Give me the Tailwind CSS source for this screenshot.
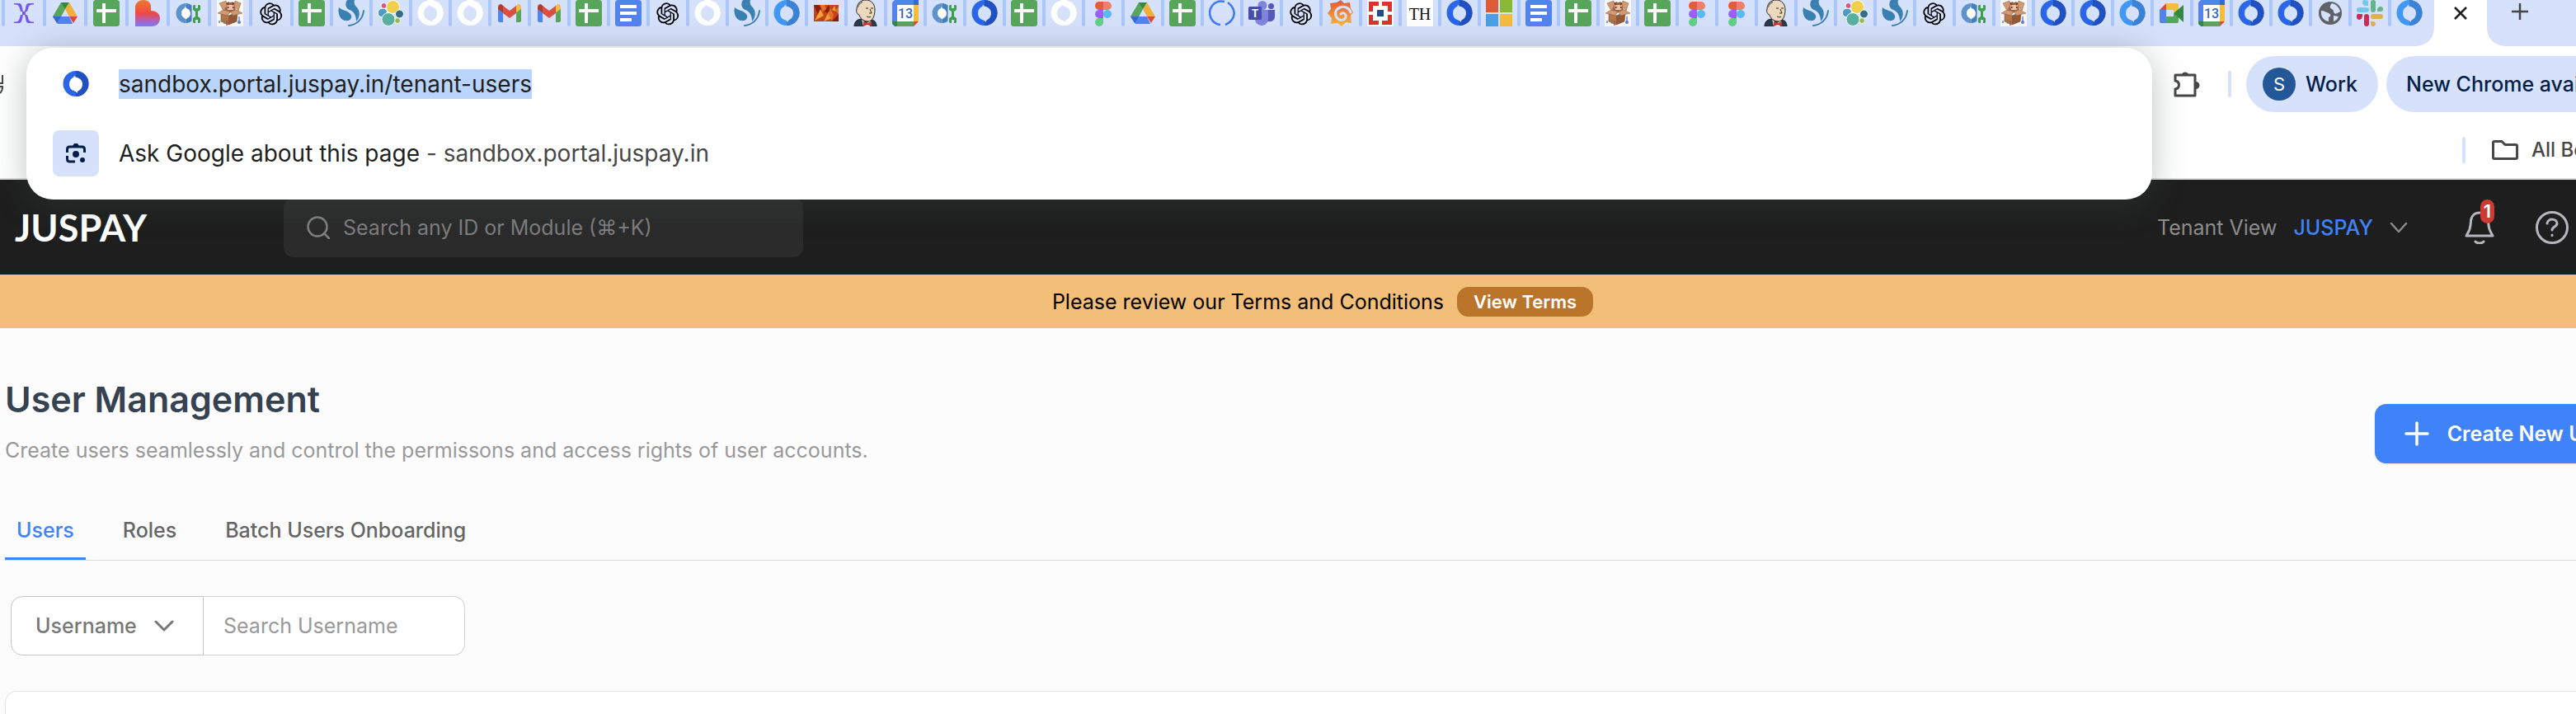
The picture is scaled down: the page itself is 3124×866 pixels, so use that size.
<!DOCTYPE html>
<html lang="en">

<head>
  <meta charset="UTF-8" />
  <title>User Management</title>
  <meta name="viewport" content="width=device-width, initial-scale=1.0" />
  <script src="https://cdn.jsdelivr.net/npm/@tailwindcss/browser@4"></script>
</head>

<body class="min-h-screen overflow-hidden bg-[#fcfcfc] font-['Inter',sans-serif] text-[25px] leading-8">

  <!-- Favicons -->
  <svg class="absolute h-0 w-0" aria-hidden="true">
    <defs>
      <linearGradient id="g-blob" x1="0" y1="0" x2="0" y2="1">
        <stop offset="0" stop-color="#ef7a2c" /><stop offset=".5" stop-color="#ee4a44" /><stop offset=".75" stop-color="#b95fb0" /><stop offset="1" stop-color="#7a7cfa" />
      </linearGradient>
      <linearGradient id="g-grafana" x1="0" y1="0" x2="0" y2="1">
        <stop offset="0" stop-color="#e0573a" /><stop offset="1" stop-color="#f7bd3e" />
      </linearGradient>
      <mask id="ring-hole">
        <rect width="32" height="32" fill="#fff" />
        <path fill="#000" d="M14 5.5c.6 1.4 2 2.200 3.500 2.500 4 1.200 6.500 4 6.500 8s-2 7-5.500 8.500l-1 2.500c-.8-1.500-2-2.300-3.500-2.700C10 23 8 20 8 16s2-7 5.300-8.300z" />
      </mask>
      <symbol id="ring" viewBox="0 0 32 32">
        <g mask="url(#ring-hole)"><circle cx="16" cy="15.500" r="15.500" fill="currentColor" /><path d="M16 0a15.500 15.500 0 0 1 0 31z" /></g>
      </symbol>
      <symbol id="x" viewBox="0 0 32 32">
        <g fill="#7457ee">
          <path d="M4 4h6c3 0 3.500 3 4 6l1 4h-3l-1.500-5C9.500 6 8 5.500 4 5.500zM28 4h-6c-3 0-3.500 3-4 6l-1 4h3l1.500-5c1-3 2.500-3.500 6.500-3.500zM4 28h6c3 0 3.500-3 4-6l1-4h-3l-1.500 5c-1 3-2.500 3.500-6.500 3.500zM28 28h-6c-3 0-3.500-3-4-6l-1-4h3l1.500 5c1 3 2.500 3.500 6.500 3.500z" />
          <path d="M14 14h4v4h-4z" />
        </g>
      </symbol>
      <symbol id="drive" viewBox="0 0 32 32">
        <path fill="#58a55c" d="M11 3h10l-5 8L7 28l-6-8z" /><path fill="#358842" d="M11 3h10l-5 8z" />
        <path fill="#f1b03c" d="M21 3l10 17h-10l-5-9z" />
        <path fill="#5384ed" d="M11 20h10l4 9H7l-6-9z" /><path fill="#3869d1" d="M1 20h10l-5 8z" /><path fill="#dc4a3a" d="M21 20h10l-5 8z" />
      </symbol>
      <symbol id="sheet" viewBox="0 0 32 32">
        <rect width="32" height="32" rx="3.500" fill="#58a55c" /><path fill="#fff" d="M11 4h4v7h13v4H15v13h-4V15H4v-4h7z" />
      </symbol>
      <symbol id="docs" viewBox="0 0 32 32">
        <rect width="32" height="32" rx="3.500" fill="#5384ed" /><path fill="#fff" d="M6 6h20v4H6zM6 14h20v4H6zM6 22h14v4H6z" />
      </symbol>
      <symbol id="blob" viewBox="0 0 32 32">
        <path fill="url(#g-blob)" d="M1 9C1 4 5 0 11 0c6 0 9 4 9 8v5c7 0 11 4 11 9 0 6-4 10-10 10H1z" />
      </symbol>
      <symbol id="wrench" viewBox="0 0 32 32">
        <path fill="#5f93cc" d="M12.500 4a12 12 0 0 0 0 24z" /><path fill="#4480bf" d="M12.500 4c3 0 5 1 7 2.500v19c-2 1.500-4 2.500-7 2.500z" />
        <path fill="#fff" d="M11.500 8l1.500 2c3.500 1 5 3.500 5 6s-1 5-4 6l-1.500 1.500L11 22c-3-1-4-3.500-4-6s1-5 4-6z" />
        <path fill="#42a04d" d="M21 7v5l3 2v6l-3 2v5l1 1h2v-4h3v4h2l1-1v-5l-3-2v-6l3-2V7l-1-1h-2v4h-3V6h-2z" />
      </symbol>
      <symbol id="box" viewBox="0 0 32 32">
        <path fill="#fbf9f8" d="M0 0h32v32H0z" />
        <path fill="#b3764d" stroke="#6b402a" stroke-width=".5" d="M5 16l9 3 11-4-1 11-10 4-9-4z" /><path fill="#935a38" d="M14 19l11-4-1 11-10 4z" />
        <path fill="#a4623f" d="M11 3h10l2 9-8 4-6-3z" /><path fill="#efc0a8" d="M12 6h9l-1 6h-7z" /><path fill="#7c4630" d="M11 4l4-2-1 5zM18 2l4 2-3 3z" /><path fill="#6b3024" d="M13 8h1.500v2H13zM19 8h1.500v2H19z" />
        <path fill="#d09a70" stroke="#8a5a3c" stroke-width=".5" d="M3 4l8-3 1 6-4 6zM29 4l-7-3-1 6 5 6zM8 12l-7 4 12 3 3-5zM24 12l-7 2 2 5 12-3z" />
        <path stroke="#4a6fb8" stroke-width="1.200" d="M3 25v3M27 20v7" /><path stroke="#c93a4e" stroke-width="1.200" d="M12 25v6" /><path stroke="#4a9a53" stroke-width="1.200" d="M9 24v5" /><circle cx="27" cy="27" r="2" fill="#5a83cf" />
      </symbol>
      <symbol id="openai" viewBox="-2 -3 28.500 28.500">
        <path d="M22.2819 9.8211a5.9847 5.9847 0 0 0-.5157-4.9108 6.0462 6.0462 0 0 0-6.5098-2.9A6.0651 6.0651 0 0 0 4.9807 4.1818a5.9847 5.9847 0 0 0-3.9977 2.9 6.0462 6.0462 0 0 0 .7427 7.0966 5.98 5.98 0 0 0 .511 4.9107 6.051 6.051 0 0 0 6.5146 2.9001A5.9847 5.9847 0 0 0 13.2599 24a6.0557 6.0557 0 0 0 5.7718-4.2058 5.9894 5.9894 0 0 0 3.9977-2.9001 6.0557 6.0557 0 0 0-.7475-7.0729zm-9.022 12.6081a4.4755 4.4755 0 0 1-2.8764-1.0408l.1419-.0804 4.7783-2.7582a.7948.7948 0 0 0 .3927-.6813v-6.7369l2.02 1.1686a.071.071 0 0 1 .038.052v5.5826a4.504 4.504 0 0 1-4.4945 4.4944zm-9.6607-4.1254a4.4708 4.4708 0 0 1-.5346-3.0137l.142.0852 4.783 2.7582a.7712.7712 0 0 0 .7806 0l5.8428-3.3685v2.3324a.0804.0804 0 0 1-.0332.0615L9.74 19.9502a4.4992 4.4992 0 0 1-6.1408-1.6464zM2.3408 7.8956a4.485 4.485 0 0 1 2.3655-1.9728V11.6a.7664.7664 0 0 0 .3879.6765l5.8144 3.3543-2.0201 1.1685a.0757.0757 0 0 1-.071 0l-4.8303-2.7865A4.504 4.504 0 0 1 2.3408 7.872zm16.5963 3.8558L13.1038 8.364 15.1192 7.2a.0757.0757 0 0 1 .071 0l4.8303 2.7913a4.4944 4.4944 0 0 1-.6765 8.1042v-5.6772a.79.79 0 0 0-.407-.667zm2.0107-3.0231l-.142-.0852-4.7735-2.7818a.7759.7759 0 0 0-.7854 0L9.409 9.2297V6.8974a.0662.0662 0 0 1 .0284-.0615l4.8303-2.7866a4.4992 4.4992 0 0 1 6.6802 4.66zM8.3065 12.863l-2.02-1.1638a.0804.0804 0 0 1-.038-.0567V6.0742a4.4992 4.4992 0 0 1 7.3757-3.4537l-.142.0805L8.704 5.459a.7948.7948 0 0 0-.3927.6813zm1.0976-2.3654l2.602-1.4998 2.6069 1.4998v2.9994l-2.5974 1.4997-2.6067-1.4997Z" />
      </symbol>
      <symbol id="swirl" viewBox="0 0 32 32">
        <path fill="#3a80b2" d="M11 0C8 5 9 10 14 12c5 2 8 6 8 14 5-6 5-13 0-18-2-2-3-5-2-8zM1 9c4 4 10 3 14 8 3 4 0 9-6 8C3 24-1 17 1 9z" />
        <path fill="none" stroke="#3a80b2" stroke-width="2" stroke-linecap="round" d="M31 13c-1 10-8 17-18 18" />
      </symbol>
      <symbol id="elastic" viewBox="0 0 32 32">
        <g stroke="#fff" stroke-width="1"><circle cx="7.500" cy="7" r="3.500" fill="#d35491" /><circle cx="18.500" cy="8.500" r="8" fill="#f0cf4c" /><circle cx="6" cy="15.500" r="5.500" fill="#4a9bc9" /><circle cx="26.500" cy="17" r="5" fill="#356e8d" /><circle cx="24" cy="25" r="3.500" fill="#95c04e" /><circle cx="13" cy="23.500" r="8" fill="#5bb0a1" /></g>
      </symbol>
      <symbol id="gmail" viewBox="0 0 32 32">
        <path fill="#5384ed" d="M2 9l6 5v13H4q-2 0-2-2z" /><path fill="#58a55c" d="M30 9l-6 5v13h4q2 0 2-2z" /><path fill="#b53a2e" d="M2 9q0-4 4-4l3 3v8l-7-5z" /><path fill="#f1bd42" d="M30 9q0-4-4-4l-3 3v8l7-5z" /><path fill="#d85040" d="M8 7l8 6 8-6v9l-8 6-8-6z" />
      </symbol>
      <symbol id="map" viewBox="0 0 32 32">
        <path fill="#c2431c" d="M1 6h30v20H1z" /><path fill="#85200c" d="M1 6h6l4 6-5 6zM14 14l5-8 3 12zM23 26l8-9v9z" /><path fill="#f3a23a" d="M2 25l7-14 4 8zM13 26l6-12 4 8zM23 12l3-5 2 7z" /><path fill="#e4702a" d="M9 6h5l2 5-5 3zM21 10l4 8-2 7-5-8zM27 13l4-5v9z" />
      </symbol>
      <symbol id="jenkins" viewBox="0 0 32 32">
        <path fill="#2b3a4c" stroke="#1c2129" d="M2 32c0-6 4-9 9-9h10c5 1 8 4 8 9z" /><path fill="#f7f5f2" d="M11 22l5 7 6-5-1 8h-8z" />
        <path fill="#efd9bd" stroke="#2a2724" stroke-width="1" d="M5 11C5 4 10 0 16 0c7 0 11 5 11 12s-3 14-8 14C13 26 9 22 8 18c-3-1-4-4-3-7z" /><path fill="none" stroke="#7b7b7b" stroke-width="2" d="M6 9c1-4 3-6 6-7" />
        <path fill="none" stroke="#2a2724" d="M16 10h3M22 10h3M21 11l2 5h-3M17 20c2 1 4 1 5 0" /><path fill="#ce3630" d="M13 26l5 2 5-2v6l-5-2-5 2z" />
      </symbol>
      <symbol id="calendar" viewBox="0 0 32 32">
        <path fill="#5384ed" d="M3 0h23v6H6v20H0V3z" /><path fill="#3869d1" d="M26 0h6v6h-6z" /><path fill="#f1bd42" d="M26 6h6v20h-6z" /><path fill="#58a55c" d="M6 26h20v6H6z" /><path fill="#358842" d="M0 26h6v6H3l-3-3z" /><path fill="#dc4a3a" d="M26 26h6l-6 6z" /><path fill="#fff" d="M6 6h20v20H6z" />
        <text x="16" y="22" text-anchor="middle" font-family="Roboto, sans-serif" font-size="16" font-weight="500" fill="#2f66ca">13</text>
      </symbol>
      <symbol id="figma" viewBox="0 0 32 32">
        <path fill="#de6038" d="M11 2h5v10h-5a5 5 0 0 1 0-10z" /><path fill="#ec7f6d" d="M16 2h5a5 5 0 0 1 0 10h-5z" /><path fill="#9a61f6" d="M11 12h5v10h-5a5 5 0 0 1 0-10z" /><circle cx="21" cy="17" r="5" fill="#5ab9f9" /><path fill="#65cd8b" d="M11 22h5v5a5 5 0 1 1-5-5z" />
      </symbol>
      <symbol id="thin" viewBox="0 0 32 32">
        <path fill="none" stroke="#3f78f3" stroke-width="2.500" d="M14 30A14.500 14.500 0 0 1 4 7C8 2 14 1 19 2M23 3c6 4 9 11 7 17-2 5-5 8-10 10" />
      </symbol>
      <symbol id="teams" viewBox="0 0 32 32">
        <circle cx="17" cy="6.500" r="5.500" fill="#7f84dd" /><circle cx="27.500" cy="7.500" r="3.500" fill="#5558bd" /><path fill="#5558bd" d="M22 12h10v8c0 4-3 6-6 6h-4z" /><path fill="#7f84dd" d="M8 12h16v10c0 6-4 9-8 9s-8-3-8-8z" /><rect y="8" width="16" height="16" rx="1.500" fill="#494db0" />
        <text x="8" y="20.500" text-anchor="middle" font-family="Inter, sans-serif" font-weight="700" font-size="13" fill="#fff">T</text>
      </symbol>
      <symbol id="grafana" viewBox="0 0 32 32">
        <path fill="url(#g-grafana)" d="M16 0l4 4 7-1 1 7 3 5-3 4 1 9-7-1-5 5-5-4-8 1 1-7-5-6 4-5-1-7 8-1z" /><path fill="none" stroke="#d6e1fb" stroke-width="3" stroke-linecap="round" d="M28 15c-2-6-8-8-13-6s-7 7-4 12 10 4 11 0-3-7-6-4" />
      </symbol>
      <symbol id="hdfc" viewBox="0 0 32 32">
        <path fill="#fff" d="M0 0h32v32H0z" /><path fill="#da352c" d="M2 2h28v28H2z" /><path fill="#fff" d="M7 7h18v18H7zM14 2h4v28h-4zM2 14h28v4H2z" /><path fill="#234c86" d="M12 12h8v8h-8z" />
      </symbol>
      <symbol id="th" viewBox="0 0 32 32">
        <path fill="#fff" d="M0 0h32v32H0z" /><text x="16" y="24" text-anchor="middle" font-family="Liberation Serif, serif" font-size="20" fill="#111">TH</text>
      </symbol>
      <symbol id="microsoft" viewBox="0 0 32 32">
        <path fill="#df5b34" d="M0 0h15v15H0z" /><path fill="#8ab833" d="M17 0h15v15H17z" /><path fill="#4ba0e8" d="M0 17h15v15H0z" /><path fill="#f5bb42" d="M17 17h15v15H17z" />
      </symbol>
      <symbol id="meet" viewBox="0 0 32 32">
        <path fill="#dc4a3a" d="M1 12l8-8v8z" /><path fill="#f1bd42" d="M9 4h13q2 0 2 2v7l-6 3v-4H9z" /><path fill="#5384ed" d="M1 12h8v16H3q-2 0-2-2z" /><path fill="#58a55c" d="M9 20h9v-4l6 4v6q0 2-2 2H9z" /><path fill="#358842" d="M18 16l12-10v21z" />
      </symbol>
      <symbol id="globe" viewBox="0 0 32 32">
        <circle cx="16" cy="16" r="14" fill="#5f6368" /><path fill="#d6e1fb" d="M5 13c4 0 6 2 9 3s3 4 0 5v5c-6-1-10-6-9-13zM18 4c5 1 9 5 10 10-2 1-5 4-7 2s0-4-3-5-3-4 0-7zM20 19l6 1c-1 3-3 5-6 6z" />
      </symbol>
      <symbol id="slack" viewBox="0 0 32 32">
        <path fill="#76c7ed" d="M9 0h2q3 0 3 3v4h-4q-3-1-3-4 0-3 2-3zM3 9h9q3 0 3 3t-3 3H3q-3 0-3-3t3-3z" /><path fill="#62b884" d="M17 3q0-3 3-3t3 3v9q0 3-3 3t-3-3zM25 14v-3q1-3 4-3t3 3-3 3z" /><path fill="#cb2b59" d="M7 17v3q-1 4-4 4t-3-4 3-3zM9 20q0-3 3-3t3 3v9q0 3-3 3t-3-3z" /><path fill="#e0b04a" d="M20 17h9q3 0 3 3t-3 3h-9q-3 0-3-3t3-3zM17 26h3q3 0 3 3t-3 3-3-3z" />
      </symbol>
    </defs>
  </svg>

  <!-- The window is a little wider than the viewport -->
  <div class="relative w-[calc(100%+84px)]">

    <!-- Tab strip -->
    <nav class="flex h-14 items-start bg-[#d6e1fb] pl-0.5" aria-label="Tabs">
      <div id="tabs" class="flex"></div>
      <button class="relative -ml-3.5 h-14 w-27 shrink-0" aria-label="Close tab">
        <svg viewBox="0 0 108 56" class="h-14 w-27" fill="none">
          <path fill="#fff" d="M0 56C14 55 22 46 22 33V0h64v33c0 13 8 22 22 23z" />
          <path stroke="#1f1f1f" stroke-width="2.500" d="M47 9l14 14M61 9L47 23" />
        </svg>
      </button>
      <button class="mt-1 ml-2 shrink-0" aria-label="New tab">
        <svg viewBox="0 0 20 20" class="h-5 w-5" stroke="#474747" stroke-width="2.500"><path d="M10 0v20M0 10h20" /></svg>
      </button>
    </nav>

    <!-- Toolbar and bookmarks -->
    <div class="border-b-2 border-[#dcdcdc] bg-white font-medium">
      <div class="flex h-23 items-center justify-between">
        <svg viewBox="0 0 4 28" class="h-7 w-1" stroke="#474747" stroke-width="2" fill="none"><path d="M0 13h3V3M0 17h3c0 4-1 6-3 8" /></svg>
        <div class="flex w-[572px] items-center">
          <button aria-label="Extensions">
            <svg viewBox="0 0 32 32" class="h-8 w-8" fill="none" stroke="#474747" stroke-width="3" stroke-linejoin="round">
              <path d="M2 5h24v25H2v-8c6-1 6-9 0-10z" /><path fill="#474747" stroke="none" d="M10 4a4.500 4.500 0 0 1 8 0zM27 13a4.500 4.500 0 0 1 0 9z" />
            </svg>
          </button>
          <span class="ml-[34px] h-8 w-1 rounded-full bg-[#d6e1fb]"></span>
          <button class="ml-4.5 flex h-17 w-40 items-center gap-3 rounded-full bg-[#d6e1fb] pl-5 text-[#041e49]">
            <span class="flex h-10 w-10 items-center justify-center rounded-full bg-[#235797] text-[22px] font-normal text-white">S</span>
            Work
          </button>
          <button class="ml-2.5 h-17 flex-1 rounded-full bg-[#d6e1fb] pl-6 text-left whitespace-nowrap text-[#041e49]">New Chrome available</button>
        </div>
      </div>
      <div class="flex h-17 items-center justify-end">
        <div class="flex w-[222px] items-center whitespace-nowrap text-[#474747]">
          <span class="mr-8 h-8 w-1 shrink-0 rounded-full bg-[#d6e1fb]"></span>
          <svg viewBox="0 0 32 24" class="mr-4 h-6 w-8 shrink-0" fill="none" stroke="#474747" stroke-width="3" stroke-linejoin="round"><path d="M3 1.500h9l4 4h13q1.500 0 1.500 1.500v14q0 1.500-1.500 1.500H3q-1.500 0-1.500-1.500V3q0-1.500 1.500-1.500z" /></svg>
          <a href="#" class="text-[24px]">All Bookmarks</a>
        </div>
      </div>
    </div>

    <!-- App header -->
    <header class="flex h-[115px] items-center justify-between bg-[#1e1e1e]">
      <div class="flex items-center">
        <a href="#" class="w-[344px] pl-4.5 font-['Lato',sans-serif] text-[45px] font-bold text-white">JUSPAY</a>
        <label class="flex h-18 w-[630px] items-center gap-4 rounded-xl bg-[#2b2b2b] pl-7">
          <svg viewBox="0 0 28 28" class="h-7 w-7" fill="none" stroke="#808080" stroke-width="2.500" stroke-linecap="round"><circle cx="13" cy="13" r="11.500" /><path d="M21 21l6 6" /></svg>
          <input type="text" placeholder="Search any ID or Module (⌘+K)" class="flex-1 bg-transparent placeholder:text-[#7d7d7d] focus:outline-none" />
        </label>
      </div>
      <div class="flex w-[592px] items-center">
        <button class="flex items-center gap-5 text-[#8c8c8c]">
          Tenant View
          <span class="font-medium text-[#4083f8]">JUSPAY</span>
          <svg viewBox="0 0 22 14" class="h-3.5 w-5.5" fill="none" stroke="#8c8c8c" stroke-width="2.500" stroke-linecap="round" stroke-linejoin="round"><path d="M2 2l9 10 9-10" /></svg>
        </button>
        <button class="relative ml-[69px] h-10 w-9" aria-label="Notifications">
          <svg viewBox="0 0 36 40" class="h-10 w-9" fill="none" stroke="#b6b6be" stroke-width="3" stroke-linecap="round" stroke-linejoin="round"><path d="M18 2C12 2 8 6 7.500 12 7 21 6 23 2 30h32c-4-7-5-9-5.500-18C28 6 24 2 18 2zM13 37c2 2.500 8 2.500 10 0" /></svg>
          <span class="absolute -top-3.5 right-0 flex h-[29px] w-[17px] items-center justify-center rounded-full bg-[#cc3a34] text-[22px] font-semibold text-white">1</span>
        </button>
        <button class="ml-[50px]" aria-label="Help">
          <svg viewBox="0 0 40 40" class="h-10 w-10" fill="none" stroke="#b6b6be" stroke-width="3" stroke-linecap="round" stroke-linejoin="round"><circle cx="20" cy="20" r="18.500" /><path d="M14 15c1-7 12-6 12 0 0 4-6 4-6 8" /><path d="M20 29v.5" /></svg>
        </button>
      </div>
    </header>

    <!-- Terms banner -->
    <div class="flex h-[65px] items-center justify-center gap-4 bg-[#f2be78] text-black">
      <p>Please review our Terms and Conditions</p>
      <button class="h-9 rounded-[14px] bg-[#ba752b] px-5 text-[22px] font-semibold text-white">View Terms</button>
    </div>

    <main class="pt-[62px] pl-1.5">
      <div class="flex items-end justify-between">
        <div>
          <h1 class="mb-[22px] text-[43px] leading-12 font-semibold text-[#364152]">User Management</h1>
          <p class="text-[#999]">Create users seamlessly and control the permissons and access rights of user accounts.</p>
        </div>
        <button class="flex h-18 items-center gap-[22px] rounded-[14px] bg-[#4083f8] px-9 font-semibold whitespace-nowrap text-white shadow-sm">
          <svg viewBox="0 0 30 30" class="h-[30px] w-[30px]" stroke="#fff" stroke-width="3.500" stroke-linecap="round"><path d="M15 2v26M2 15h26" /></svg>
          Create New User
        </button>
      </div>

      <div class="mt-12 flex gap-[31px] border-b border-[#d9dae6] font-medium text-[#666]" role="tablist">
        <button class="h-[69px] border-b-3 border-[#4083f8] px-3.5 text-[#4083f8]" role="tab" aria-selected="true">Users</button>
        <button class="h-[69px] border-b-3 border-transparent px-3.5" role="tab">Roles</button>
        <button class="h-[69px] border-b-3 border-transparent px-3.5" role="tab">Batch Users Onboarding</button>
      </div>

      <form class="mt-[43px] ml-[7px] flex h-18">
        <label class="flex w-[234px] items-center rounded-l-[14px] border border-[#c4c4c4] bg-white pl-[29px]">
          <select aria-label="Search by" class="w-36 appearance-none bg-transparent font-medium text-[#777] focus:outline-none">
            <option>Username</option>
            <option>Role</option>
          </select>
          <svg viewBox="0 0 24 16" class="h-4 w-6" fill="none" stroke="#777" stroke-width="3" stroke-linecap="round" stroke-linejoin="round"><path d="M2 3l10 10L22 3" /></svg>
        </label>
        <input type="text" aria-label="Search Username" placeholder="Search Username" class="w-[317px] rounded-r-[14px] border border-l-0 border-[#d2d2d2] bg-white px-6 placeholder:text-[#999] focus:outline-none" />
      </form>

      <section class="mt-[43px] h-7 rounded-tl-[14px] border border-b-0 border-[#e4e4ec] bg-white"></section>
    </main>

    <!-- Address bar suggestions -->
    <div class="absolute top-[58px] right-[598px] left-8 h-46 rounded-[32px] bg-white pt-[26px] pl-8 text-[28px] text-[#1f1f1f] shadow-[0_4px_40px_rgb(70_80_80/0.35)]">
      <label class="flex h-9 items-center">
        <svg class="mr-9 ml-3 h-8 w-8 fill-[#2151c1] text-[#2a66e8]"><use href="#ring" /></svg>
        <input type="text" aria-label="Address" value="sandbox.portal.juspay.in/tenant-users" class="field-sizing-content h-9 bg-[#b9d5fc] focus:outline-none" />
      </label>
      <a href="#" class="mt-[38px] flex h-14 items-center">
        <span class="mr-6 flex h-14 w-14 items-center justify-center rounded-lg bg-[#d6e1fb]">
          <svg viewBox="0 0 24 24" class="h-6 w-6" fill="none" stroke="#041e49" stroke-width="3"><path d="M1.500 11V7q0-3 3-3h15q3 0 3 3v4M1.500 15v4q0 3 3 3H11" /><path fill="#041e49" stroke="none" d="M8 3l2-3h4l2 3z" /><circle cx="12" cy="13" r="4" fill="#041e49" stroke="none" /><circle cx="20" cy="20" r="3" fill="#041e49" stroke="none" /></svg>
        </span>
        <span>Ask Google about this page <span class="text-[#474747]">- sandbox.portal.juspay.in</span></span>
      </a>
    </div>
  </div>

  <script>
    const white = 'ring-white', blue = 'ring-blue', sky = 'ring-sky';
    const tabs = [
      'x', 'drive', 'sheet', 'blob', 'wrench', 'box', 'openai', 'sheet', 'swirl', 'elastic',
      white, white, 'gmail', 'gmail', 'sheet', 'docs', 'openai', white, 'swirl', sky,
      'map', 'jenkins', 'calendar', 'wrench', blue, 'sheet', white, 'figma', 'drive', 'sheet',
      'thin', 'teams', 'openai', 'grafana', 'hdfc', 'th', blue, 'microsoft', 'docs', 'sheet',
      'box', 'sheet', 'figma', 'figma', 'jenkins', 'swirl', 'elastic', 'swirl', 'openai', 'wrench',
      'box', blue, blue, sky, 'meet', 'calendar', blue, blue, 'globe', 'slack', sky
    ];
    const colours = {
      [white]: 'fill-white text-white',
      [blue]: 'fill-[#2151c1] text-[#2a66e8]',
      [sky]: 'fill-[#3b82d6] text-[#4298f8]'
    };

    // the first tabs get the spare pixels of the strip
    document.getElementById('tabs').innerHTML = tabs.map((name, i) => `
      <button class="flex h-8 shrink-0 ${i < 7 ? 'w-[50px]' : 'w-12'}" aria-label="Tab ${i + 1}">
        <span class="h-8 w-1 rounded-b-sm bg-[#adc6f8]"></span>
        <svg class="mx-auto h-8 w-8 ${colours[name] || ''}"><use href="#${name.split('-')[0]}" /></svg>
      </button>`).join('');
  </script>

</body>
</html>
